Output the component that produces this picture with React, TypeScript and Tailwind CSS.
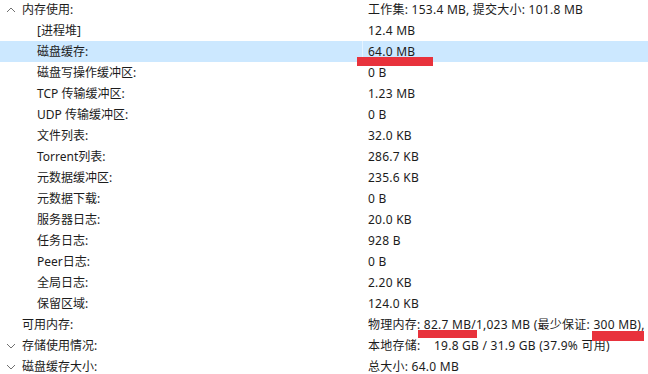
import React from "react";

type Row = { label: string; value: React.ReactNode; depth: number; arrow?: "up" | "down"; selected?: boolean };

const Chevron = ({ dir }: { dir: "up" | "down" }) => (
  <svg width="10" height="6" viewBox="0 0 10 6" className="absolute left-[6px] top-[8px]">
    {dir === "up" ? (
      <path d="M1 5 L5 1 L9 5" fill="none" stroke="#707070" strokeWidth="1" />
    ) : (
      <path d="M1 1 L5 5 L9 1" fill="none" stroke="#707070" strokeWidth="1" />
    )}
  </svg>
);

const rows: Row[] = [
  { label: "内存使用:", value: "工作集: 153.4 MB, 提交大小: 101.8 MB", depth: 0, arrow: "up" },
  { label: "[进程堆]", value: "12.4 MB", depth: 1 },
  { label: "磁盘缓存:", value: "64.0 MB", depth: 1, selected: true },
  { label: "磁盘写操作缓冲区:", value: "0 B", depth: 1 },
  { label: "TCP 传输缓冲区:", value: "1.23 MB", depth: 1 },
  { label: "UDP 传输缓冲区:", value: "0 B", depth: 1 },
  { label: "文件列表:", value: "32.0 KB", depth: 1 },
  { label: "Torrent列表:", value: "286.7 KB", depth: 1 },
  { label: "元数据缓冲区:", value: "235.6 KB", depth: 1 },
  { label: "元数据下载:", value: "0 B", depth: 1 },
  { label: "服务器日志:", value: "20.0 KB", depth: 1 },
  { label: "任务日志:", value: "928 B", depth: 1 },
  { label: "Peer日志:", value: "0 B", depth: 1 },
  { label: "全局日志:", value: "2.20 KB", depth: 1 },
  { label: "保留区域:", value: "124.0 KB", depth: 1 },
  { label: "可用内存:", value: "物理内存: 82.7 MB/1,023 MB (最少保证: 300 MB),", depth: 0 },
  { label: "存储使用情况:", value: "本地存储:\u00a0\u00a0\u00a0 19.8 GB / 31.9 GB (37.9% 可用)", depth: 0, arrow: "down" },
  { label: "磁盘缓存大小:", value: "总大小: 64.0 MB", depth: 0, arrow: "down" },
];

export default function App() {
  return (
    <div
      className="relative w-[648px] h-[374px] overflow-hidden bg-white text-[12px] text-[#1c1c1c]"
      style={{ fontFamily: '"Noto Sans", "Noto Sans CJK SC", sans-serif' }}
    >
      <div className="flex flex-col mt-[-1px]">
        {rows.map((r, i) => (
          <div key={i} className={`flex h-[21px] items-center ${r.selected ? "bg-[#cce8ff]" : ""}`}>
            <div className={`relative h-full w-[362px] flex items-center ${r.depth === 0 ? "pl-[22px]" : "pl-[37px]"}`}>
              {r.arrow && <Chevron dir={r.arrow} />}
              <span className="whitespace-nowrap leading-none">{r.label}</span>
            </div>
            <div className={`h-full w-px ${r.selected ? "bg-[#e5f3ff]" : ""}`} />
            <div className="flex-1 h-full flex items-center pl-[5px]">
              <span className="whitespace-nowrap leading-none tracking-[0.25px]">{r.value}</span>
            </div>
          </div>
        ))}
      </div>
      <div className="absolute left-[357px] top-[57px] w-[76px] h-[9px] bg-[#e8323c]" />
      <div className="absolute left-[418px] top-[330px] w-[59px] h-[8px] bg-[#e8323c]" />
      <div className="absolute left-[592px] top-[331px] w-[52px] h-[10px] bg-[#e8323c]" />
    </div>
  );
}
